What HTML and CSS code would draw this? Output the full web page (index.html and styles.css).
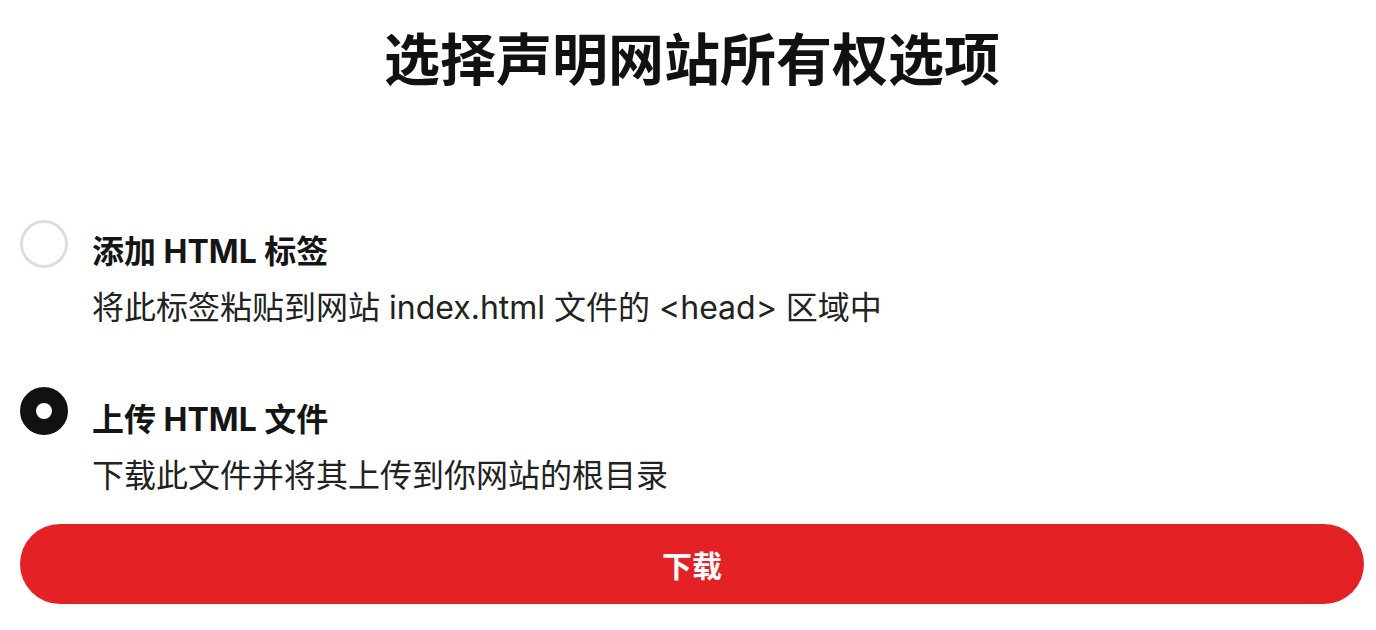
FILE: index.html
```html
<!DOCTYPE html>
<html lang="zh-CN">
<head>
<meta charset="utf-8">
<title>选择声明网站所有权选项</title>
<link rel="stylesheet" href="styles.css">
</head>
<body>
<main class="page">
  <h1 class="heading">选择声明网站所有权选项</h1>
  <div class="options">
    <label class="option">
      <span class="radio"></span>
      <span class="option-text">
        <span class="option-title">添加 HTML 标签</span>
        <span class="option-desc">将此标签粘贴到网站 index.html 文件的 &lt;head&gt; 区域中</span>
      </span>
    </label>
    <label class="option">
      <span class="radio radio-checked"></span>
      <span class="option-text">
        <span class="option-title">上传 HTML 文件</span>
        <span class="option-desc">下载此文件并将其上传到你网站的根目录</span>
      </span>
    </label>
  </div>
  <button class="download" type="button">下载</button>
</main>
</body>
</html>
```
FILE: styles.css
```css
html, body {
  margin: 0;
  padding: 0;
  background: #ffffff;
}

body {
  font-family: Inter, "Noto Sans CJK SC", sans-serif;
  color: #111111;
}

.page {
  padding: 0 12px 0 20px;
  display: flex;
  flex-direction: column;
}

.heading {
  margin: 20px 0 0;
  font-size: 56px;
  line-height: 80px;
  font-weight: 700;
  text-align: center;
  color: #111111;
  letter-spacing: 0;
}

.options {
  margin-top: 124px;
  display: flex;
  flex-direction: column;
  gap: 56px;
}

.option {
  display: flex;
  align-items: flex-start;
  gap: 24px;
}

.radio {
  flex: none;
  width: 48px;
  height: 48px;
  box-sizing: border-box;
  border-radius: 50%;
  border: 3px solid #dedede;
  margin-top: -4px;
}

.radio-checked {
  border: 16px solid #111111;
  margin-top: -5px;
}

.option-text {
  display: flex;
  flex-direction: column;
}

.option-title {
  font-size: 32px;
  line-height: 56px;
  font-weight: 700;
  color: #151515;
}

.option-desc {
  font-size: 32px;
  line-height: 56px;
  font-weight: 400;
  color: #222222;
}

.download {
  margin-top: 20px;
  height: 80px;
  border: none;
  border-radius: 40px;
  background: #e42125;
  color: #ffffff;
  font-family: Inter, "Noto Sans CJK SC", sans-serif;
  font-size: 30px;
  font-weight: 700;
  cursor: pointer;
}
```
